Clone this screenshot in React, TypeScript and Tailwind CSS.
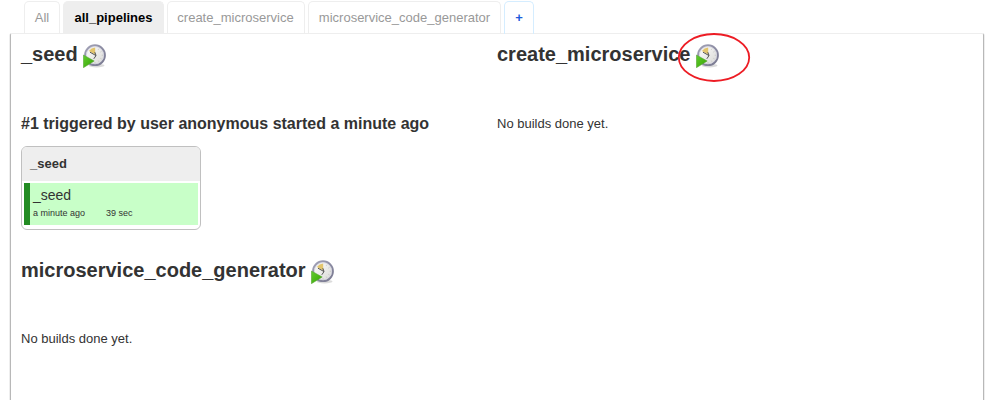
function ClockIcon() {
  return (
    <svg width="24" height="24" viewBox="0 0 24 24" className="shrink-0">
      <defs>
        <linearGradient id="face" x1="0" y1="0" x2="1" y2="1">
          <stop offset="0" stopColor="#ffffff" />
          <stop offset="1" stopColor="#d8d8d4" />
        </linearGradient>
        <linearGradient id="ring" x1="0" y1="0" x2="1" y2="1">
          <stop offset="0" stopColor="#a3a3b8" />
          <stop offset="1" stopColor="#77778f" />
        </linearGradient>
        <linearGradient id="play" x1="0" y1="0" x2="1" y2="1">
          <stop offset="0" stopColor="#63cc30" />
          <stop offset="1" stopColor="#35a500" />
        </linearGradient>
      </defs>
      <ellipse cx="13.5" cy="21.6" rx="8" ry="1.8" fill="#000" opacity="0.14" />
      <circle cx="12" cy="11.2" r="9.9" fill="url(#face)" stroke="url(#ring)" strokeWidth="2" />
      <circle cx="12" cy="11.2" r="8.6" fill="none" stroke="#d4d4df" strokeWidth="0.8" />
      <path d="M12.2 10.4 L5.9 7 Q8 4 12.2 3.6 Z" fill="#e3c56c" />
      <path d="M7 8.2 L13 11.6 L10.8 14.8 M11.8 8.2 L13 11.4" fill="none" stroke="#444444" strokeWidth="0.9" />
      <path d="M18.8 11.2h1 M12 18.3v1 M15.8 4.8l-.5.9 M18.4 7.5l-.9.5 M18.4 14.9l-.9-.5 M15.8 17.6l-.5-.9" stroke="#b0b0b0" strokeWidth="0.7" />
      <path d="M0.4 11 L11.2 17 L0.4 23.7 Z" fill="url(#play)" stroke="#5aa53a" strokeWidth="0.6" />
    </svg>
  );
}

function Title({ children, gap = "gap-[5px]" }: { children: string; gap?: string }) {
  return (
    <h1 className={`flex h-6 items-start text-[20px] leading-5 font-bold whitespace-nowrap ${gap}`}>
      <span>{children}</span>
      <ClockIcon />
    </h1>
  );
}

const tab = "h-[33px] shrink-0 rounded-t-[5px] border border-b-0 text-center leading-[32px] whitespace-nowrap";

export default function App() {
  return (
    <div className="relative h-[400px] w-[996px] overflow-hidden bg-white font-['Liberation_Sans',Arial,sans-serif] text-[13px] text-[#333333]">
      <nav className="flex h-[33px] items-start gap-[3px] pt-px pl-6 text-[#999999]">
        <div className={`${tab} w-9 border-[#eeeeee]`}>All</div>
        <div className={`${tab} w-[101px] border-[#eeeeee] bg-[#eeeeee] font-bold text-black`}>all_pipelines</div>
        <div className={`${tab} w-[138px] border-[#eeeeee] pr-px`}>create_microservice</div>
        <div className={`${tab} w-[193px] border-[#eeeeee]`}>microservice_code_generator</div>
        <div className={`${tab} w-[30px] border-[#d5edff] font-bold text-[#1c5bdc]`}>+</div>
      </nav>
      <div className="ml-[9px] h-[367px] w-[976px] rounded-t-[3px] border-x border-[#eeeeee]">
        <main className="flex h-full rounded-t-[2px] border-x border-t border-x-[#b8b8b8] border-t-[#eeeeee] bg-white pt-[10px] pl-[10px]">
          <div className="w-[476px]">
            <Title>_seed</Title>
            <h2 className="mt-[46px] text-[16px] leading-[20px] font-bold">#1 triggered by user anonymous started a minute ago</h2>
            <section className="mt-3 flex h-[84px] w-[180px] flex-col overflow-hidden rounded-[6px] border border-[#c0c0c0]">
              <header className="h-[34px] bg-[#eeeeee] pl-2 leading-[33px] font-bold">_seed</header>
              <div className="mx-[2px] mt-[2px] h-[42px] border-l-[6px] border-[#228b22] bg-[#c8ffc8] pl-[3px]">
                <div className="h-[25px] text-[14px] leading-[24px]">_seed</div>
                <div className="flex gap-[21px] text-[9px] leading-[10px]">
                  <span>a minute ago</span>
                  <span>39 sec</span>
                </div>
              </div>
            </section>
            <div className="mt-[30px]">
              <Title>microservice_code_generator</Title>
              <p className="mt-[45px] leading-[20px]">No builds done yet.</p>
            </div>
          </div>
          <div>
            <Title gap="gap-1.5">create_microservice</Title>
            <p className="mt-[46px] leading-[20px]">No builds done yet.</p>
          </div>
        </main>
      </div>
      <svg width="74" height="52" className="absolute top-[32px] left-[677px]">
        <ellipse cx="37" cy="25.5" rx="35.2" ry="23.5" fill="none" stroke="#ed1c24" strokeWidth="1.8" />
      </svg>
    </div>
  );
}
